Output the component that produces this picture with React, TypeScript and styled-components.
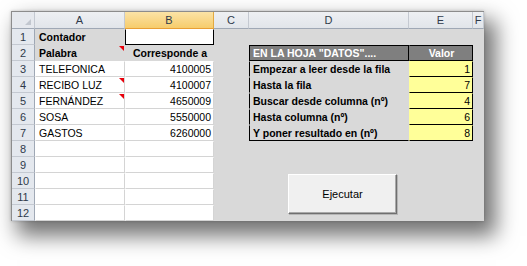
import React from 'react';
import styled, { createGlobalStyle } from 'styled-components';

const GlobalStyle = createGlobalStyle`
  html, body {
    margin: 0;
    padding: 0;
    background: #ffffff;
  }
  body {
    font-family: "Liberation Sans", Arial, sans-serif;
  }
`;

type Fill = 'white' | 'gray' | 'dark' | 'yellow';

const fills: Record<Fill, string> = {
  white: '#ffffff',
  gray: '#d9d9d9',
  dark: '#7f7f7f',
  yellow: '#ffff99',
};

const Page = styled.div`
  width: 527px;
  height: 266px;
  padding: 11px 0 0 11px;
  box-sizing: border-box;
`;

const Sheet = styled.div`
  position: relative;
  width: 472px;
  border-top: 1px solid #8c8c8c;
  border-left: 1px solid #8c8c8c;
  background: #d9d9d9;
  box-shadow: 9px 12px 20px 3px rgba(0, 0, 0, 0.55), 0 0 3px rgba(0, 0, 0, 0.2);
  display: grid;
  grid-template-columns: 23px 90px 89px 35px 160px 64px 11px;
  grid-template-rows: 17px repeat(12, 16px);
  font-size: 10.5px;
  color: #000;
  overflow: hidden;
`;

const Corner = styled.div`
  position: relative;
  background: #e6e9ee;
  border-right: 1px solid #c4c9d1;
  border-bottom: 1px solid #9fa8b5;
  box-sizing: border-box;

  &::after {
    content: '';
    position: absolute;
    right: 3px;
    bottom: 3px;
    border-left: 6px solid transparent;
    border-bottom: 6px solid #c2c7cf;
  }
`;

const ColHead = styled.div<{ $selected?: boolean }>`
  display: flex;
  align-items: center;
  justify-content: center;
  box-sizing: border-box;
  background: ${(p) =>
    p.$selected
      ? 'linear-gradient(#fbe3a6, #f6cc6c)'
      : 'linear-gradient(#eef0f3, #e1e5ea)'};
  border-right: 1px solid ${(p) => (p.$selected ? '#e2a941' : '#c4c9d1')};
  border-bottom: 1px solid ${(p) => (p.$selected ? '#e99f34' : '#9fa8b5')};
  color: #2f3a4a;
  font-size: 11px;
  white-space: nowrap;
  overflow: hidden;
`;

const RowNum = styled.div`
  display: flex;
  align-items: center;
  justify-content: center;
  box-sizing: border-box;
  background: #e4e8ee;
  border-right: 1px solid #9fa8b5;
  border-bottom: 1px solid #c4c9d1;
  color: #2f3a4a;
  font-size: 11px;
`;

const Cell = styled.div<{
  $fill: Fill;
  $bold?: boolean;
  $align?: 'left' | 'right' | 'center';
  $grid?: boolean;
  $bt?: boolean;
  $br?: boolean;
  $bb?: boolean;
  $bl?: boolean;
  $comment?: boolean;
}>`
  position: relative;
  display: flex;
  align-items: center;
  justify-content: ${(p) =>
    p.$align === 'right' ? 'flex-end' : p.$align === 'center' ? 'center' : 'flex-start'};
  padding: 0 2px 0 3px;
  box-sizing: border-box;
  background: ${(p) => fills[p.$fill]};
  color: ${(p) => (p.$fill === 'dark' ? '#ffffff' : '#000000')};
  font-weight: ${(p) => (p.$bold ? 700 : 400)};
  white-space: nowrap;
  border-top: 1px solid ${(p) => (p.$bt ? '#000' : 'transparent')};
  border-left: 1px solid ${(p) => (p.$bl ? '#000' : 'transparent')};
  border-right: 1px solid
    ${(p) => (p.$br ? '#000' : p.$grid ? '#d4d4d4' : 'transparent')};
  border-bottom: 1px solid
    ${(p) => (p.$bb ? '#000' : p.$grid ? '#d4d4d4' : 'transparent')};

  ${(p) =>
    p.$comment &&
    `&::after {
      content: '';
      position: absolute;
      top: 0;
      right: 0;
      border-left: 5px solid transparent;
      border-top: 5px solid #e8000b;
    }`}
`;

const RunButton = styled.button`
  position: absolute;
  left: 276px;
  top: 162px;
  width: 109px;
  height: 40px;
  background: #f0f0f0;
  border: 1px solid;
  border-color: #ffffff #6f6f6f #6f6f6f #ffffff;
  box-shadow: inset -1px -1px 0 #a9a9a9, 1px 1px 0 #b5b5b5;
  font-family: "Liberation Sans", Arial, sans-serif;
  font-size: 11px;
  color: #000;
  padding: 0;
`;

interface Row {
  a?: string;
  b?: string;
  d?: string;
  e?: string;
  comment?: boolean;
}

const params: Row[] = [
  { a: 'TELEFONICA', b: '4100005', d: 'Empezar a leer desde la fila', e: '1' },
  { a: 'RECIBO LUZ', b: '4100007', d: 'Hasta la fila', e: '7', comment: true },
  { a: 'FERNÁNDEZ', b: '4650009', d: 'Buscar desde columna (nº)', e: '4', comment: true },
  { a: 'SOSA', b: '5550000', d: 'Hasta columna (nº)', e: '6' },
  { a: 'GASTOS', b: '6260000', d: 'Y poner resultado en (nº)', e: '8' },
];

const App: React.FC = () => {
  const cols = ['A', 'B', 'C', 'D', 'E', 'F'];

  return (
    <Page>
      <GlobalStyle />
      <Sheet>
        <Corner />
        {cols.map((c) => (
          <ColHead key={c} $selected={c === 'B'}>
            {c}
          </ColHead>
        ))}

        {/* fila 1 */}
        <RowNum>1</RowNum>
        <Cell $fill="gray" $bold>
          Contador
        </Cell>
        <Cell $fill="white" $bl $bb $br />
        <Cell $fill="gray" />
        <Cell $fill="gray" />
        <Cell $fill="gray" />
        <Cell $fill="gray" />

        {/* fila 2 */}
        <RowNum>2</RowNum>
        <Cell $fill="gray" $bold $comment>
          Palabra
        </Cell>
        <Cell $fill="gray" $bold $align="center">
          Corresponde a
        </Cell>
        <Cell $fill="gray" />
        <Cell $fill="dark" $bold $bt $bl $bb $br>
          EN LA HOJA "DATOS"....
        </Cell>
        <Cell $fill="dark" $bold $align="center" $bt $bb $br>
          Valor
        </Cell>
        <Cell $fill="gray" />

        {params.map((r, i) => (
          <React.Fragment key={r.a}>
            <RowNum>{i + 3}</RowNum>
            <Cell $fill="white" $grid $comment={r.comment}>
              {r.a}
            </Cell>
            <Cell $fill="white" $grid $align="right">
              {r.b}
            </Cell>
            <Cell $fill="gray" />
            <Cell $fill="gray" $bold $bl $bb={i === params.length - 1}>
              {r.d}
            </Cell>
            <Cell $fill="yellow" $align="right" $br $bb>
              {r.e}
            </Cell>
            <Cell $fill="gray" />
          </React.Fragment>
        ))}

        {[8, 9, 10, 11, 12].map((n) => (
          <React.Fragment key={n}>
            <RowNum>{n}</RowNum>
            <Cell $fill="white" $grid />
            <Cell $fill="white" $grid />
            <Cell $fill="gray" />
            <Cell $fill="gray" />
            <Cell $fill="gray" />
            <Cell $fill="gray" />
          </React.Fragment>
        ))}

        <RunButton>Ejecutar</RunButton>
      </Sheet>
    </Page>
  );
};

export default App;
